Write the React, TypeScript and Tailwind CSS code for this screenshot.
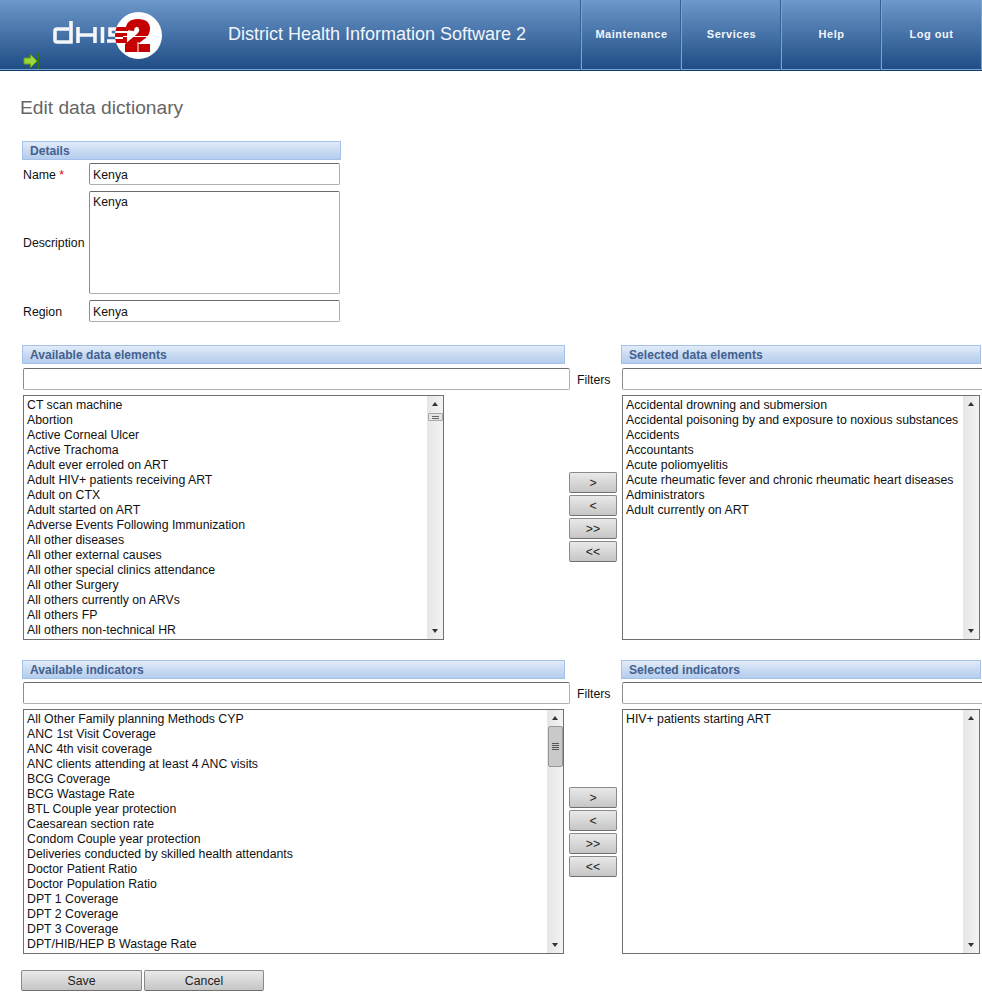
const DATA_LEFT = [
  'CT scan machine',
  'Abortion',
  'Active Corneal Ulcer',
  'Active Trachoma',
  'Adult ever erroled on ART',
  'Adult HIV+ patients receiving ART',
  'Adult on CTX',
  'Adult started on ART',
  'Adverse Events Following Immunization',
  'All other diseases',
  'All other external causes',
  'All other special clinics attendance',
  'All other Surgery',
  'All others currently on ARVs',
  'All others FP',
  'All others non-technical HR',
];

const DATA_RIGHT = [
  'Accidental drowning and submersion',
  'Accidental poisoning by and exposure to noxious substances',
  'Accidents',
  'Accountants',
  'Acute poliomyelitis',
  'Acute rheumatic fever and chronic rheumatic heart diseases',
  'Administrators',
  'Adult currently on ART',
];

const IND_LEFT = [
  'All Other Family planning Methods CYP',
  'ANC 1st Visit Coverage',
  'ANC 4th visit coverage',
  'ANC clients attending at least 4 ANC visits',
  'BCG Coverage',
  'BCG Wastage Rate',
  'BTL Couple year protection',
  'Caesarean section rate',
  'Condom Couple year protection',
  'Deliveries conducted by skilled health attendants',
  'Doctor Patient Ratio',
  'Doctor Population Ratio',
  'DPT 1 Coverage',
  'DPT 2 Coverage',
  'DPT 3 Coverage',
  'DPT/HIB/HEP B Wastage Rate',
];

const IND_RIGHT = ['HIV+ patients starting ART'];

const NAV = ['Maintenance', 'Services', 'Help', 'Log out'];

function Logo() {
  return (
    <svg width="110" height="50" viewBox="0 0 110 50" className="ml-[53px] mt-[11px] shrink-0">
      <defs>
        <clipPath id="logo-circle">
          <circle cx="85.5" cy="24.5" r="23.5" />
        </clipPath>
      </defs>
      <g fill="none" stroke="#f4f6f9" strokeWidth="3.6">
        <path d="M18 10 V31 H4 Q2 31 2 29 V20 Q2 18 4 18 H16" />
        <path d="M25 16 V32 M25 24 H42 M42 16 V32" />
        <path d="M49.5 16 V32" />
        <path d="M75 18 H57 V24 H72 V30 H54" />
      </g>
      <circle cx="85.5" cy="24.5" r="23.5" fill="#fff" />
      <path d="M75 18 H57 V24 H72 V30 H54" fill="none" stroke="#c40000" strokeWidth="4" clipPath="url(#logo-circle)" />
      <path
        d="M72.5 19 Q73 8 85 8 Q97 8 97 18 Q97 25 90 29 L85 33 H97 V41 H72 V33 L84 23 Q87 20 86 18 Q85 15 83 16 Q81 17 81 20 Z"
        fill="#c40000"
      />
      <path d="M70 25.5 H99 M85 31 V42" stroke="#fff" strokeWidth="1" />
    </svg>
  );
}

function SectionBar({ title, className }: { title: string; className: string }) {
  return (
    <div
      className={`h-[19px] border border-[#a3c1ea] bg-gradient-to-b from-[#e2ecf8] via-[#c9dbf2] to-[#b5cdee] pl-[7px] text-[12.1px] font-bold leading-[18px] text-[#44618f] ${className}`}
    >
      {title}
    </div>
  );
}

function ScrollBar({ thumb }: { thumb?: 'small' | 'large' }) {
  return (
    <div className="flex w-[16px] shrink-0 flex-col items-center bg-gradient-to-r from-[#e6e6e6] to-[#f3f3f3] pt-[6px] pb-[6px]">
      <div className="h-0 w-0 border-x-[3.5px] border-b-[4px] border-x-transparent border-b-[#333]" />
      {thumb === 'small' && (
        <div className="mt-[7px] flex h-[8px] w-[15px] flex-col justify-center gap-[1px] rounded-[1px] border border-[#a8a8a8] bg-[#e4e4e4] px-[3px]">
          <div className="h-px bg-[#666]" />
          <div className="h-px bg-[#666]" />
        </div>
      )}
      {thumb === 'large' && (
        <div className="mt-[6px] flex h-[41px] w-[15px] flex-col items-center justify-center gap-[1px] rounded-[2px] border border-[#999] bg-[#c9c9c9]">
          <div className="h-px w-[7px] bg-[#555]" />
          <div className="h-px w-[7px] bg-[#555]" />
          <div className="h-px w-[7px] bg-[#555]" />
          <div className="h-px w-[7px] bg-[#555]" />
        </div>
      )}
      <div className="mt-auto h-0 w-0 border-x-[3.5px] border-t-[4px] border-x-transparent border-t-[#333]" />
    </div>
  );
}

function ListBox({ items, thumb, className }: { items: string[]; thumb?: 'small' | 'large'; className: string }) {
  return (
    <div className={`flex h-[245px] shrink-0 overflow-hidden border border-[#707070] bg-white ${className}`}>
      <div className="min-w-0 flex-1 overflow-hidden whitespace-nowrap pl-[3px] pt-[2px] text-[12.3px] leading-[15px] text-[#111]">
        {items.map((item) => (
          <div key={item}>{item}</div>
        ))}
      </div>
      <ScrollBar thumb={thumb} />
    </div>
  );
}

function TextBox({ className, value }: { className: string; value?: string }) {
  return (
    <div
      className={`h-[22px] shrink-0 rounded-[2px] border border-[#b0b0b0] border-t-[#6a6a6a] border-l-[#8c8c8c] bg-white pl-[3px] text-[12.3px] leading-[21px] text-[#111] ${className}`}
    >
      {value}
    </div>
  );
}

function MoveButtons({ offset }: { offset: string }) {
  return (
    <div className={`flex w-[48px] shrink-0 flex-col gap-[2px] ${offset}`}>
      {['>', '<', '>>', '<<'].map((label) => (
        <button
          key={label}
          className="h-[21px] rounded-[2px] border border-[#8a8a8a] border-b-[#6f6f6f] bg-gradient-to-b from-[#e9e9e9] to-[#c6c6c6] text-[12.3px] leading-[18px] text-[#222]"
        >
          {label}
        </button>
      ))}
    </div>
  );
}

function Picker({
  leftTitle,
  rightTitle,
  left,
  right,
  leftWidth,
  thumb,
  offset,
  filterGap,
}: {
  leftTitle: string;
  rightTitle: string;
  left: string[];
  right: string[];
  leftWidth: string;
  thumb: 'small' | 'large';
  offset: string;
  filterGap: string;
}) {
  return (
    <section>
      <div className="flex pl-[22px]">
        <SectionBar title={leftTitle} className="w-[543px]" />
        <SectionBar title={rightTitle} className="ml-[56px] w-[360px]" />
      </div>
      <div className={`flex items-center pl-[23px] ${filterGap}`}>
        <TextBox className="w-[547px]" />
        <span className="ml-[7px] w-[45px] shrink-0 pt-[2px] text-[12.3px] text-[#111]">Filters</span>
        <TextBox className="w-[370px]" />
      </div>
      <div className="mt-[5px] flex pl-[23px]">
        <div className="w-[546px] shrink-0">
          <ListBox items={left} thumb={thumb} className={leftWidth} />
        </div>
        <MoveButtons offset={offset} />
        <ListBox items={right} className="ml-[5px] w-[358px]" />
      </div>
    </section>
  );
}

export default function App() {
  return (
    <div className="h-screen w-full overflow-hidden bg-white font-['Liberation_Sans',Arial,sans-serif]">
      <header className="relative flex h-[71px] border-b border-[#0d3d6e] bg-gradient-to-b from-[#6c98ca] to-[#1e4c84] shadow-[inset_0_-1px_0_#7ea5cf]">
        <div className="w-[228px] shrink-0">
          <Logo />
        </div>
        <div className="flex-1 pt-[21px] text-[18px] leading-[26px] text-[#f2f5fa]">
          District Health Information Software 2
        </div>
        <nav className="flex">
          {NAV.map((item) => (
            <div
              key={item}
              className="flex w-[100px] items-center justify-center border-l border-[#7fa3cb] pb-[2px] text-[11px] font-bold tracking-[0.5px] text-[#f2f5fa] shadow-[-1px_0_0_#2f5f95]"
            >
              {item}
            </div>
          ))}
          <div className="w-px border-l border-[#7fa3cb]" />
        </nav>
        <svg width="16" height="17" viewBox="0 0 16 17" className="absolute left-[23px] top-[53px]">
          <path d="M1 5 H7.5 V1.5 L14 8 L7.5 14.5 V11 H1 Z" fill="#9bd63a" stroke="#66a01c" strokeWidth="1" />
          <path d="M15.5 0 V16" stroke="#2f7a12" strokeWidth="1.5" />
        </svg>
      </header>

      <main>
        <h1 className="ml-[20px] mt-[26px] text-[19.2px] font-normal leading-[22px] text-[#666]">Edit data dictionary</h1>

        <SectionBar title="Details" className="ml-[22px] mt-[22px] w-[319px]" />
        <div className="mt-[3px] flex items-center pl-[23px]">
          <span className="w-[66px] pt-[2px] text-[12.3px] text-[#111]">
            Name <span className="text-[#e00]">*</span>
          </span>
          <TextBox className="w-[251px] leading-[22px]" value="Kenya" />
        </div>
        <div className="mt-[6px] flex items-center pl-[23px]">
          <span className="w-[66px] pt-[2px] text-[12.3px] text-[#111]">Description</span>
          <TextBox className="h-[103px] w-[251px]" value="Kenya" />
        </div>
        <div className="mt-[6px] flex items-center pl-[23px]">
          <span className="w-[66px] pt-[2px] text-[12.3px] text-[#111]">Region</span>
          <TextBox className="w-[251px] pt-[1px]" value="Kenya" />
        </div>

        <div className="mt-[23px]">
          <Picker
            leftTitle="Available data elements"
            rightTitle="Selected data elements"
            left={DATA_LEFT}
            right={DATA_RIGHT}
            leftWidth="w-[421px]"
            thumb="small"
            offset="mt-[77px]"
            filterGap="mt-[4px]"
          />
        </div>
        <div className="mt-[20px]">
          <Picker
            leftTitle="Available indicators"
            rightTitle="Selected indicators"
            left={IND_LEFT}
            right={IND_RIGHT}
            leftWidth="w-[541px]"
            thumb="large"
            offset="mt-[78px]"
            filterGap="mt-[3px]"
          />
        </div>

        <div className="mt-[16px] flex gap-[2px] pl-[21px]">
          <button className="h-[21px] w-[121px] rounded-[2px] border border-[#8a8a8a] border-b-[#6f6f6f] bg-gradient-to-b from-[#e9e9e9] to-[#c6c6c6] pt-[1px] text-[12.3px] text-[#222]">
            Save
          </button>
          <button className="h-[21px] w-[120px] rounded-[2px] border border-[#8a8a8a] border-b-[#6f6f6f] bg-gradient-to-b from-[#e9e9e9] to-[#c6c6c6] pt-[1px] text-[12.3px] text-[#222]">
            Cancel
          </button>
        </div>
      </main>
    </div>
  );
}
